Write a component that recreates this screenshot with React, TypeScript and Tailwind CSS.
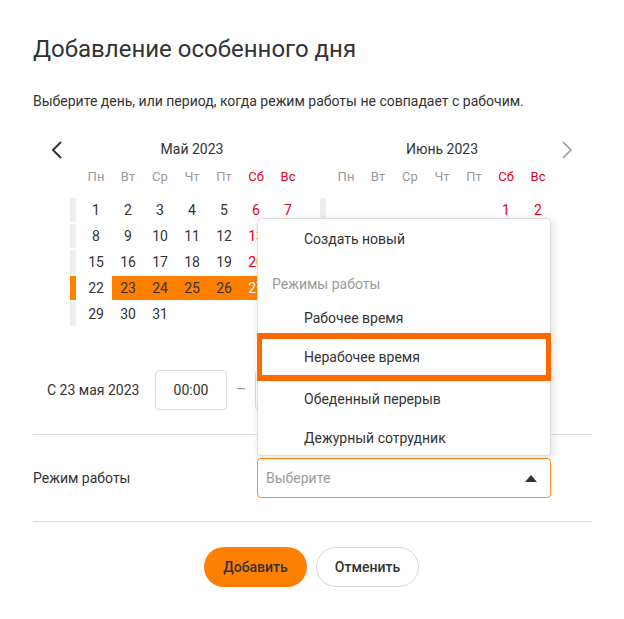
import React from 'react'

const weekdays = ['Пн', 'Вт', 'Ср', 'Чт', 'Пт', 'Сб', 'Вс']

type Day = number | null

const may: Day[][] = [
  [1, 2, 3, 4, 5, 6, 7],
  [8, 9, 10, 11, 12, 13, 14],
  [15, 16, 17, 18, 19, 20, 21],
  [22, 23, 24, 25, 26, 27, 28],
  [29, 30, 31, null, null, null, null],
]

const june: Day[][] = [
  [null, null, null, null, null, 1, 2],
  [3, 4, 5, 6, 7, 8, 9],
  [10, 11, 12, 13, 14, 15, 16],
  [17, 18, 19, 20, 21, 22, 23],
  [24, 25, 26, 27, 28, 29, 30],
]

function Month({
  title,
  weeks,
  selected = [],
  activeWeek = -1,
}: {
  title: string
  weeks: Day[][]
  selected?: number[]
  activeWeek?: number
}) {
  return (
    <div className="flex flex-col w-[234px]">
      <div className="h-[20px] pl-[10px] flex items-center justify-center text-[14px] text-[#333]">{title}</div>
      <div className="flex mt-[9px] pl-[10px] h-[18px] items-center">
        {weekdays.map((w, i) => (
          <div
            key={w}
            className={`w-[32px] text-center text-[13px] ${i >= 5 ? 'text-[#e3001b]' : 'text-[#9a9a9a]'}`}
          >
            {w}
          </div>
        ))}
      </div>
      <div className="flex flex-col gap-[2px] mt-[12px]">
        {weeks.map((week, wi) => (
          <div key={wi} className="flex h-[24px]">
            <div className={`w-[6px] h-full ${wi === activeWeek ? 'bg-[#ff7f00]' : 'bg-[#ededed]'}`} />
            <div className="w-[4px]" />
            {week.map((d, di) => {
              const sel = d !== null && selected.includes(d)
              const weekend = di >= 5
              let color = 'text-[#333]'
              if (weekend) color = sel ? 'text-white' : 'text-[#e3001b]'
              return (
                <div
                  key={di}
                  className={`w-[32px] h-full flex items-center justify-center text-[14px] ${color} ${sel ? 'bg-[#ff7f00]' : ''}`}
                >
                  {d ?? ''}
                </div>
              )
            })}
          </div>
        ))}
      </div>
    </div>
  )
}

export default function App() {
  return (
    <div className="w-[624px] h-[619px] bg-white pt-[33px] pl-[33px] pr-[32px] font-['Roboto',sans-serif] text-[#333]">
      <h1 className="text-[24px] leading-[32px] text-[#333]">Добавление особенного дня</h1>
      <p className="mt-[26px] text-[14px] leading-[20px] text-[#333]">
        Выберите день, или период, когда режим работы не совпадает с рабочим.
      </p>

      {/* Календарь */}
      <div className="flex mt-[28px] ml-[17px]">
        <div className="w-[20px] h-[20px] flex items-start pt-[2px]">
          <svg width="12" height="18" viewBox="0 0 12 18" className="ml-[1px]">
            <path d="M10 1 L2 9 L10 17" fill="none" stroke="#333" strokeWidth="2" />
          </svg>
        </div>
        <Month title="Май 2023" weeks={may} selected={[23, 24, 25, 26, 27, 28]} activeWeek={3} />
        <div className="w-[16px]" />
        <Month title="Июнь 2023" weeks={june} />
        <div className="ml-[7px] pt-[2px]">
          <svg width="12" height="18" viewBox="0 0 12 18">
            <path d="M2 1 L10 9 L2 17" fill="none" stroke="#9a9a9a" strokeWidth="1.6" />
          </svg>
        </div>
      </div>

      {/* Время */}
      <div className="flex items-center mt-[44px] ml-[14px] h-[40px]">
        <span className="text-[14px] w-[108px]">С 23 мая 2023</span>
        <div className="w-[72px] h-[40px] border border-[#dcdcdc] rounded-[4px] flex items-center justify-center text-[14px]">
          00:00
        </div>
        <span className="w-[28px] text-center text-[#999]">–</span>
        <div className="w-[72px] h-[40px] border border-[#dcdcdc] rounded-[4px]" />
      </div>

      <div className="mt-[24px] border-t border-[#dcdcdc]" />

      {/* Режим работы */}
      <div className="flex items-center mt-[23px]">
        <span className="w-[224px] text-[14px]">Режим работы</span>
        <div className="relative w-[294px]">
          <div className="absolute left-0 bottom-full mb-[2px] w-full bg-white border border-[#dcdcdc] rounded-[4px] shadow-[2px_2px_10px_rgba(0,0,0,0.12)] text-[14px]">
            <div className="h-[40px] flex items-center pl-[46px]">Создать новый</div>
            <div className="h-[42px] pt-[16px] pl-[14px] text-[#9a9a9a] leading-[18px]">Режимы работы</div>
            <div className="h-[32px] pt-[2px] flex items-center pl-[46px]">Рабочее время</div>
            <div className="h-[48px] -mx-[1px] border-x-[5px] border-y-[6px] border-[#ff6a00] flex items-center pl-[42px]">
              Нерабочее время
            </div>
            <div className="h-[37px] flex items-center pl-[46px]">Обеденный перерыв</div>
            <div className="h-[37px] pt-[4px] flex items-center pl-[46px]">Дежурный сотрудник</div>
          </div>
          <div className="h-[40px] border border-[#ff8a1f] rounded-[4px] flex items-center justify-between pl-[8px] pr-[13px]">
            <span className="text-[14px] text-[#9a9a9a]">Выберите</span>
            <svg width="12" height="7" viewBox="0 0 12 7">
              <path d="M0 7 L6 0 L12 7 Z" fill="#333" />
            </svg>
          </div>
        </div>
      </div>

      <div className="mt-[23px] border-t border-[#dcdcdc]" />

      {/* Кнопки */}
      <div className="flex justify-center gap-[9px] mt-[25px] pr-[2px]">
        <button className="w-[103px] h-[40px] rounded-full bg-[#ff7f00] text-[14px] font-medium text-[#333]">
          Добавить
        </button>
        <button className="w-[103px] h-[40px] rounded-full bg-white border border-[#d6d6d6] text-[14px] font-medium text-[#333]">
          Отменить
        </button>
      </div>
    </div>
  )
}
